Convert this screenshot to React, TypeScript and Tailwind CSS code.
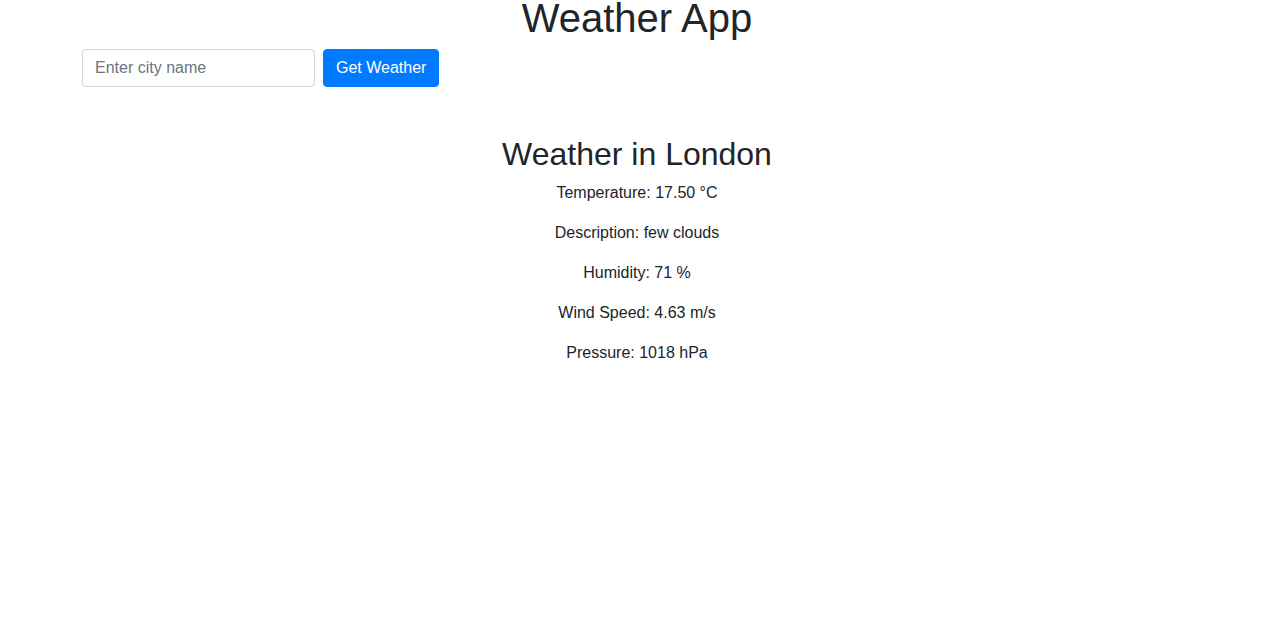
export default function App() {
  const weather = [
    "Temperature: 17.50 °C",
    "Description: few clouds",
    "Humidity: 71 %",
    "Wind Speed: 4.63 m/s",
    "Pressure: 1018 hPa",
  ];

  return (
    <div className="min-h-screen bg-white text-[#212529] font-['Liberation_Sans',Arial,sans-serif]">
      <div className="max-w-[1140px] mx-auto px-[15px]">
        <h1 className="text-center text-[40px] leading-[48px] -mt-[6px] mb-[7px]">Weather App</h1>
        <form className="flex gap-2" onSubmit={(e) => e.preventDefault()}>
          <input
            type="text"
            placeholder="Enter city name"
            className="w-[233px] h-[38px] px-3 text-base text-[#495057] border border-[#ced4da] rounded-[4px] placeholder:text-[#6c757d] outline-none"
          />
          <button
            type="submit"
            className="h-[38px] px-3 text-base text-white bg-[#007bff] rounded-[4px] border border-[#007bff]"
          >
            Get Weather
          </button>
        </form>
        <div className="text-center mt-12">
          <h2 className="text-[32px] leading-[38.4px] mb-2">Weather in London</h2>
          {weather.map((line) => (
            <p key={line} className="text-base leading-6 mb-4">
              {line}
            </p>
          ))}
        </div>
      </div>
    </div>
  );
}
